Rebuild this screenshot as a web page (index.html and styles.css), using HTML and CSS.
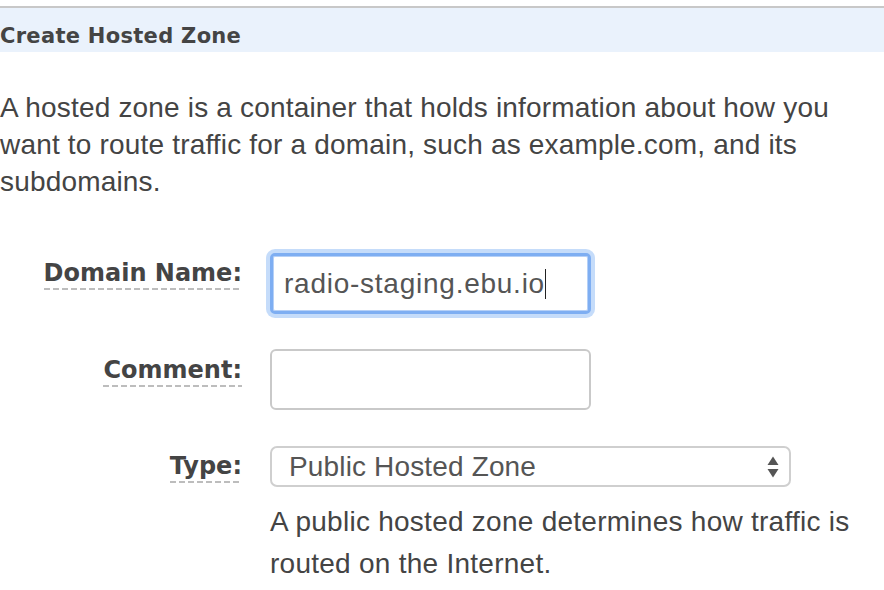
FILE: index.html
```html
<!DOCTYPE html>
<html>
<head>
<meta charset="utf-8">
<link rel="stylesheet" href="styles.css">
</head>
<body>
<div class="panel">
  <div class="panel-header">Create Hosted Zone</div>
  <p class="intro">A hosted zone is a container that holds information about how you want to route traffic for a domain, such as example.com, and its subdomains.</p>
  <div class="form">
    <div class="label-cell row-domain"><span class="label">Domain Name:</span></div>
    <div class="control-cell row-domain">
      <div class="input input-focus"><span class="value">radio-staging.ebu.io</span><span class="caret"></span></div>
    </div>
    <div class="label-cell row-comment"><span class="label">Comment:</span></div>
    <div class="control-cell row-comment">
      <div class="input"></div>
    </div>
    <div class="label-cell row-type"><span class="label">Type:</span></div>
    <div class="control-cell row-type">
      <div class="select">
        <span class="select-value">Public Hosted Zone</span>
        <svg class="arrows" width="12" height="24" viewBox="0 0 12 24">
          <path d="M6 1.5 L11.5 10 L0.5 10 Z" fill="#555"/>
          <path d="M6 22.5 L11.5 14 L0.5 14 Z" fill="#555"/>
        </svg>
      </div>
      <p class="help">A public hosted zone determines how traffic is routed on the Internet.</p>
    </div>
  </div>
</div>
</body>
</html>
```
FILE: styles.css
```css
html, body {
  margin: 0;
  padding: 0;
  background: #fff;
}
body {
  width: 884px;
  height: 590px;
  overflow: hidden;
}
.panel {
  padding-top: 6px;
}
.panel-header {
  border-top: 2px solid #c8c8c8;
  background: #eaf2fc;
  height: 46px;
  box-sizing: border-box;
  padding-top: 17px;
  font-family: "DejaVu Sans", Verdana, sans-serif;
  font-weight: bold;
  font-size: 21px;
  line-height: 22px;
  letter-spacing: 0.3px;
  color: #444;
}
.intro {
  margin: 37px 0 0 0;
  font-family: "Liberation Sans", Arial, sans-serif;
  font-size: 28px;
  line-height: 37px;
  letter-spacing: 0.18px;
  color: #444;
  width: 860px;
}
.form {
  display: grid;
  grid-template-columns: 242px auto;
  column-gap: 28px;
  margin-top: 53px;
  align-items: start;
}
.label-cell {
  text-align: right;
  font-family: "DejaVu Sans", Verdana, sans-serif;
  font-weight: bold;
  font-size: 24px;
  color: #444;
}
.label {
  display: inline-block;
  line-height: 30px;
  background-image: repeating-linear-gradient(to right, #bdbdbd 0 6px, transparent 6px 9px);
  background-repeat: no-repeat;
  background-size: 100% 2px;
  background-position: left bottom;
  height: 32px;
}
.label-cell.row-domain { padding-top: 5px; }
.label-cell.row-comment { padding-top: 6px; }
.label-cell.row-type { padding-top: 5px; }
.control-cell.row-comment, .label-cell.row-comment { margin-top: 35px; }
.control-cell.row-type, .label-cell.row-type { margin-top: 36px; }
.input {
  width: 321px;
  height: 61px;
  box-sizing: border-box;
  border: 2px solid #c9c9c9;
  border-radius: 6px;
  background: #fff;
  display: flex;
  align-items: center;
  padding-left: 13px;
  font-family: "Liberation Sans", Arial, sans-serif;
  font-size: 28px;
  letter-spacing: 0.75px;
  color: #555;
}
.input-focus {
  border: 3px solid #7eaef2;
  box-shadow: 0 0 0 4px rgba(140, 185, 245, 0.5), inset 0 0 0 1px #b5d0f7;
  border-radius: 5px;
  padding-left: 11px;
}
.caret {
  display: inline-block;
  width: 1px;
  height: 30px;
  background: #222;
  margin-left: 0;
}
.select {
  width: 521px;
  height: 41px;
  box-sizing: border-box;
  border: 2px solid #cfcfcf;
  border-radius: 7px;
  display: flex;
  align-items: center;
  justify-content: space-between;
  padding: 0 10px 0 17px;
  font-family: "Liberation Sans", Arial, sans-serif;
  font-size: 28px;
  letter-spacing: 0.15px;
  color: #555;
}
.help {
  margin: 14px 0 0 0;
  font-family: "Liberation Sans", Arial, sans-serif;
  font-size: 28px;
  line-height: 42px;
  letter-spacing: 0.26px;
  color: #444;
  width: 600px;
}
```
